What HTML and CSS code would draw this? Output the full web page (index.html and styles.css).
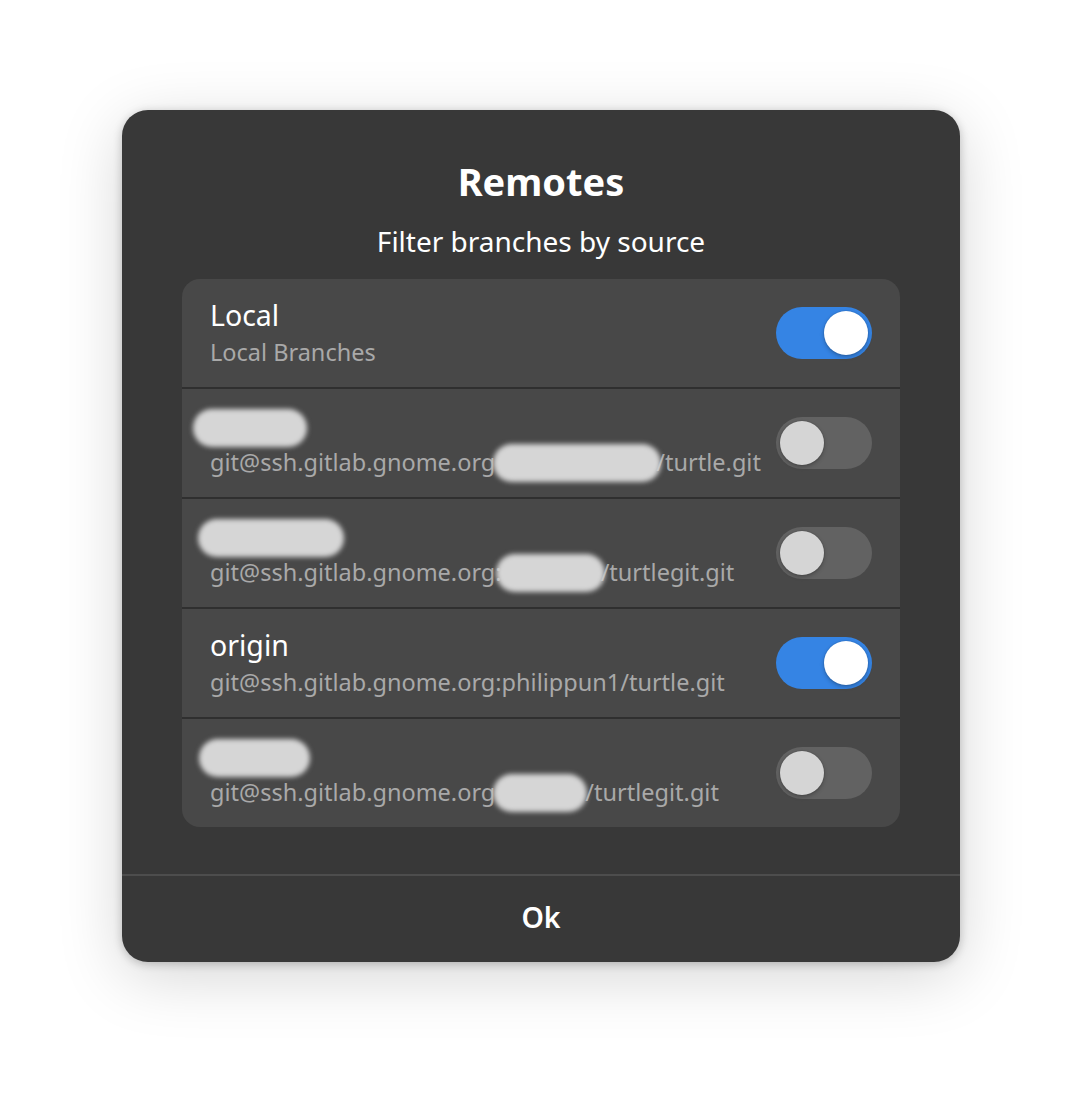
FILE: index.html
```html
<!DOCTYPE html>
<html lang="en">
<head>
<meta charset="utf-8">
<title>Remotes</title>
<link rel="stylesheet" href="styles.css">
</head>
<body>
<div class="dialog">
  <div class="header">
    <h1 class="title">Remotes</h1>
    <p class="subtitle">Filter branches by source</p>
  </div>
  <div class="list">
    <div class="row">
      <div class="text">
        <div class="row-title">Local</div>
        <div class="row-sub">Local Branches</div>
      </div>
      <div class="switch on"><span class="knob"></span></div>
    </div>
    <div class="sep"></div>
    <div class="row">
      <div class="text">
        <div class="row-title"><span class="blob blob-t1"></span></div>
        <div class="row-sub">git@ssh.gitlab.gnome.org<span class="blob blob-s1"></span>/turtle.git</div>
      </div>
      <div class="switch"><span class="knob"></span></div>
    </div>
    <div class="sep"></div>
    <div class="row">
      <div class="text">
        <div class="row-title"><span class="blob blob-t2"></span></div>
        <div class="row-sub">git@ssh.gitlab.gnome.org:<span class="blob blob-s2"></span>/turtlegit.git</div>
      </div>
      <div class="switch"><span class="knob"></span></div>
    </div>
    <div class="sep"></div>
    <div class="row">
      <div class="text">
        <div class="row-title">origin</div>
        <div class="row-sub">git@ssh.gitlab.gnome.org:philippun1/turtle.git</div>
      </div>
      <div class="switch on"><span class="knob"></span></div>
    </div>
    <div class="sep"></div>
    <div class="row">
      <div class="text">
        <div class="row-title"><span class="blob blob-t3"></span></div>
        <div class="row-sub">git@ssh.gitlab.gnome.org<span class="blob blob-s3"></span>/turtlegit.git</div>
      </div>
      <div class="switch"><span class="knob"></span></div>
    </div>
  </div>
  <div class="footer">
    <div class="ok">Ok</div>
  </div>
</div>
</body>
</html>
```
FILE: styles.css
```css
* { box-sizing: border-box; }
html, body { margin: 0; padding: 0; }
body {
  background: #ffffff;
  padding: 110px 122px 0;
  min-height: 1096px;
  font-family: "Noto Sans", "Open Sans", sans-serif;
  color: #ffffff;
}
.dialog {
  width: 838px;
  height: 852px;
  background: #383838;
  border-radius: 26px;
  box-shadow: 0 14px 64px rgba(0,0,0,0.17), 0 2px 10px rgba(0,0,0,0.22);
  display: flex;
  flex-direction: column;
  overflow: hidden;
}
.header {
  padding-top: 47px;
  text-align: center;
}
.title {
  margin: 0 0 18px;
  font-size: 38px;
  line-height: 48px;
  font-weight: 700;
}
.subtitle {
  margin: 0;
  font-size: 28px;
  line-height: 36px;
  font-weight: 400;
}
.list {
  margin: 20px 60px 0;
  background: #484848;
  border-radius: 18px;
  overflow: hidden;
}
.sep {
  height: 2px;
  background: #2f2f2f;
}
.row {
  height: 108px;
  padding: 0 28px;
  display: flex;
  align-items: center;
  justify-content: space-between;
}
.text {
  display: flex;
  flex-direction: column;
  gap: 4px;
  min-width: 0;
  margin-bottom: 2px;
}
.row-title {
  font-size: 28.5px;
  line-height: 36px;
  height: 36px;
  white-space: nowrap;
}
.row-sub {
  font-size: 23.5px;
  line-height: 30px;
  height: 30px;
  color: #a9a9a9;
  white-space: nowrap;
}
.blob {
  display: inline-block;
  height: 38px;
  border-radius: 19px;
  background: #d6d6d6;
  filter: blur(2.5px);
  vertical-align: middle;
}
.blob-t1 { width: 114px; margin-left: -17px; }
.blob-t2 { width: 146px; margin-left: -12px; }
.blob-t3 { width: 111px; margin-left: -11px; }
.blob-s1 { width: 168px; margin: -8px -5px -4px -2px; }
.blob-s2 { width: 109px; margin: -8px -4px -4px -6px; }
.blob-s3 { width: 94px; margin: -8px -2px -4px -2px; }
.switch {
  flex: none;
  width: 96px;
  height: 52px;
  border-radius: 26px;
  background: #626262;
  padding: 4px;
  display: flex;
  justify-content: flex-start;
}
.switch.on {
  background: #3584e4;
  justify-content: flex-end;
}
.knob {
  width: 44px;
  height: 44px;
  border-radius: 50%;
  background: #d5d5d5;
  box-shadow: 0 2px 4px rgba(0,0,0,0.25), 0 0 0 1px rgba(0,0,0,0.06);
}
.switch.on .knob {
  background: #ffffff;
}
.footer {
  margin-top: auto;
  border-top: 2px solid #4d4d4d;
  height: 88px;
  padding-bottom: 4px;
  display: flex;
  align-items: center;
  justify-content: center;
}
.ok {
  font-size: 28.5px;
  font-weight: 600;
  line-height: 36px;
}
```
